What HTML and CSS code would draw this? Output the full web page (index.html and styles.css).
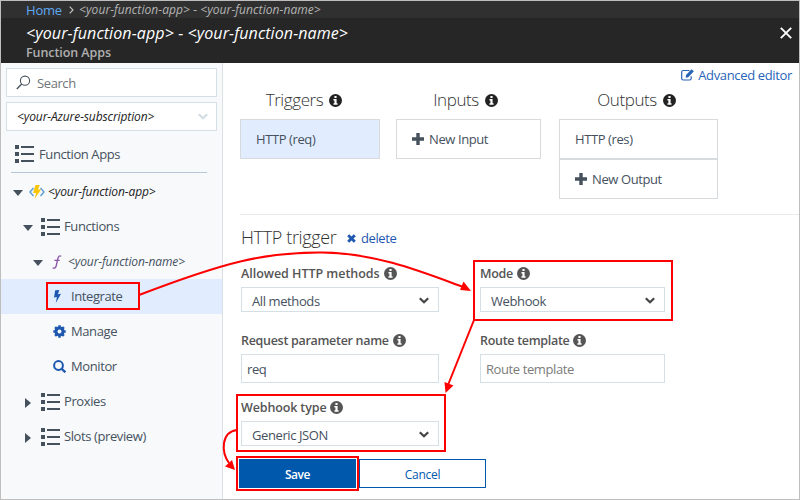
FILE: index.html
```html
<!DOCTYPE html>
<html lang="en">
<head>
<meta charset="utf-8">
<title>Function Apps</title>
<link rel="stylesheet" href="styles.css">
</head>
<body>
<svg class="defs" aria-hidden="true">
  <symbol id="list" viewBox="0 0 19 18"><path d="M0 0h4v4H0zM0 7h4v4H0zM0 14h4v4H0zM6 1h13v2H6zM6 8h13v2H6zM6 15h13v2H6z"/></symbol>
  <symbol id="info" viewBox="0 0 12 12"><circle cx="6" cy="6" r="6"/><path fill="#fff" d="M5 1.800h2v1.800H5zM4.100 4.700H7v3.800h.9V10H4.100V8.500H5V6.100h-.9z"/></symbol>
  <symbol id="plus" viewBox="0 0 12 12"><path d="M4.300 0h3.400v4.300H12v3.400H7.700V12H4.300V7.700H0V4.300h4.300z"/></symbol>
  <symbol id="chev" viewBox="0 0 10 7"><path d="M.8 1.200 5 5.200l4.200-4" fill="none" stroke="currentColor" stroke-width="2.200"/></symbol>
</svg>
<div class="frame">
  <nav class="crumbs">
    <a class="home">Home</a>
    <svg class="sep" viewBox="0 0 5 8"><path d="M.7.7 4 4 .7 7.300" fill="none" stroke="#c8c8c8" stroke-width="1.100"/></svg>
    <span class="path">&lt;your-function-app&gt; - &lt;your-function-name&gt;</span>
  </nav>
  <header class="head">
    <div>
      <h1 class="title">&lt;your-function-app&gt; - &lt;your-function-name&gt;</h1>
      <p class="subtitle">Function Apps</p>
    </div>
    <svg class="close" viewBox="0 0 12 12"><path d="M.8.8l10.400 10.400M11.200.8.8 11.200" stroke="#fff" stroke-width="1.900"/></svg>
  </header>
  <div class="body">
    <aside class="side">
      <div class="box search">
        <svg class="glass" viewBox="0 0 15 15"><circle cx="9" cy="5.700" r="4.600" fill="none" stroke="currentColor" stroke-width="1.100"/><path d="M5.700 9 .8 14" stroke="currentColor" stroke-width="1.300"/></svg>
        <span>Search</span>
      </div>
      <div class="box subs"><em>&lt;your-Azure-subscription&gt;</em><svg class="chev pale"><use href="#chev"/></svg></div>
      <div class="apps"><svg class="list"><use href="#list"/></svg><span>Function Apps</span></div>
      <ul class="tree">
        <li class="l1"><i class="down"></i>
          <svg class="bolt-app" viewBox="0 0 16 14"><path d="M4.500 3 1 7l3.500 4M11.500 3 15 7l-3.500 4" fill="none" stroke="#5a9fd6" stroke-width="1.400"/><path fill="#fdc60a" d="M6.500 0h4.300L9 4.500h3.200L5.500 14l1.600-6H4z"/></svg>
          <em class="app">&lt;your-function-app&gt;</em></li>
        <li class="l2"><i class="down"></i><svg class="list"><use href="#list"/></svg><span>Functions</span></li>
        <li class="l3"><i class="down"></i>
          <svg class="func" viewBox="0 0 10 14"><path d="M9.300 1.300C7.500.2 6.300 1.200 5.700 4L4.300 10.500C3.800 12.900 2.500 13.700.7 12.800M2.400 5.300h5.300" fill="none" stroke="#8a56a8" stroke-width="1.300"/></svg>
          <em class="name">&lt;your-function-name&gt;</em></li>
        <li class="l4 on"><svg class="leaf" viewBox="0 0 13 13"><path d="M2.200.3 6.200 0 5 4.200 8 3.700 2.800 13l1.100-6L1 7.600z"/></svg><span>Integrate</span></li>
        <li class="l4"><svg class="leaf" viewBox="0 0 13 13"><circle cx="6.500" cy="6.500" r="3.500" fill="none" stroke="currentColor" stroke-width="3"/><path d="M6.500.3v2.500M6.500 10.200v2.500M.3 6.500h2.500M10.200 6.500h2.500M2.100 2.100l1.800 1.800M9.100 9.100l1.800 1.800M2.100 10.900l1.800-1.800M9.100 3.900l1.800-1.800" stroke="currentColor" stroke-width="2.500"/></svg><span>Manage</span></li>
        <li class="l4"><svg class="leaf" viewBox="0 0 13 13"><circle cx="5.500" cy="5.500" r="4.400" fill="none" stroke="currentColor" stroke-width="2"/><path d="M8.700 8.700l3.600 3.600" stroke="currentColor" stroke-width="2.300"/></svg><span>Monitor</span></li>
        <li class="l2"><i class="right"></i><svg class="list"><use href="#list"/></svg><span>Proxies</span></li>
        <li class="l2"><i class="right"></i><svg class="list"><use href="#list"/></svg><span>Slots (preview)</span></li>
      </ul>
    </aside>
    <main class="main">
      <a class="advanced"><svg class="edit" viewBox="0 0 13 12"><path d="M8.500 1.500H2.200Q.7 1.500.7 3v6.500Q.7 11 2.200 11h6.500q1.500 0 1.500-1.500V7.300" fill="none" stroke="currentColor" stroke-width="1.200"/><path d="M10.500.2 12.900 2.300 7.300 8.200 4.700 8.700 5 6.100z"/></svg><span>Advanced editor</span></a>
      <section class="bindings">
        <div class="col triggers"><h2><span>Triggers</span><svg class="info"><use href="#info"/></svg></h2>
          <div class="card sel"><span>HTTP (req)</span></div></div>
        <div class="col inputs"><h2><span>Inputs</span><svg class="info"><use href="#info"/></svg></h2>
          <div class="card"><svg class="plus"><use href="#plus"/></svg><span>New Input</span></div></div>
        <div class="col outputs"><h2><span>Outputs</span><svg class="info"><use href="#info"/></svg></h2>
          <div class="card"><span>HTTP (res)</span></div>
          <div class="card"><svg class="plus"><use href="#plus"/></svg><span>New Output</span></div></div>
      </section>
      <section class="form">
        <div class="formhead"><h2>HTTP trigger</h2><svg class="x" viewBox="0 0 9 9"><path d="M1.200 1.200l6.600 6.600M7.800 1.200 1.200 7.800" stroke="currentColor" stroke-width="2.800"/></svg><a>delete</a></div>
        <div class="grid">
          <div class="field"><label><span class="allowed">Allowed HTTP methods</span><svg class="info"><use href="#info"/></svg></label><div class="ctl pick"><span>All methods</span><svg class="chev"><use href="#chev"/></svg></div></div>
          <div class="field"><label><span>Mode</span><svg class="info"><use href="#info"/></svg></label><div class="ctl pick"><span>Webhook</span><svg class="chev"><use href="#chev"/></svg></div></div>
          <div class="field"><label><span>Request parameter name</span><svg class="info"><use href="#info"/></svg></label><div class="ctl text"><span>req</span></div></div>
          <div class="field"><label><span>Route template</span><svg class="info"><use href="#info"/></svg></label><div class="ctl text hint"><span>Route template</span></div></div>
          <div class="field"><label><span class="hooktype">Webhook type</span><svg class="info"><use href="#info"/></svg></label><div class="ctl pick"><span>Generic JSON</span><svg class="chev"><use href="#chev"/></svg></div></div>
        </div>
        <div class="actions"><button class="save">Save</button><button class="cancel">Cancel</button></div>
      </section>
    </main>
  </div>
</div>
<svg class="marks" viewBox="0 0 800 500">
  <g fill="none" stroke="#f00" stroke-width="2">
    <rect x="47" y="283" width="92" height="26"/>
    <rect x="474" y="261" width="198" height="59"/>
    <rect x="237" y="395" width="208" height="56"/>
    <rect x="237" y="457" width="121" height="33"/>
    <path d="M139 295C225 262 265 252 322 252.500C375 253 420 271 463 287"/>
    <path d="M474 320 448 385"/>
    <path d="M237 430C221 432 221 452 229 463"/>
  </g>
  <g fill="#f00">
    <path d="M471 291 463.500 281.500 460 290z"/>
    <path d="M445.500 393 444.500 382 453.500 385.500z"/>
    <path d="M235 470 225 466.500 232 460z"/>
  </g>
</svg>
</body>
</html>
```
FILE: styles.css
```css
* { box-sizing: border-box; margin: 0; padding: 0; }
body { font: 13px/18px "Open Sans", "Noto Sans", sans-serif; color: #46515e; letter-spacing: -0.4px; overflow: hidden; }
svg { display: block; flex: none; fill: currentColor; }
span, em, a { white-space: nowrap; }
.defs { position: absolute; width: 0; height: 0; }
.frame { width: 800px; height: 500px; border: 1px solid #bdbebd; display: flex; flex-direction: column; background: #fff; }
.crumbs { height: 17px; background: #303030; display: flex; align-items: center; padding-left: 25px; font-size: 13px; }
.home { color: #5ea9f0; width: 43px; letter-spacing: -0.2px; }
.sep { width: 5px; height: 8px; margin-right: 5px; }
.path { font-style: italic; font-size: 12px; color: #b4b4b4; letter-spacing: 0.08px; padding-top: 1px; }
.head { height: 45px; background: #262626; color: #fff; display: flex; justify-content: space-between; padding: 4px 7px 0 25px; }
.title { font-size: 16px; line-height: 22px; font-weight: 400; font-style: italic; letter-spacing: 0.1px; }
.subtitle { font-size: 12.5px; line-height: 18px; font-weight: 600; color: #b0b0b0; letter-spacing: -0.07px; }
.close { width: 12px; height: 12px; margin-top: 5px; }
.body { flex: 1; display: flex; min-height: 0; }
.side { width: 222px; background: #f7f9fb; border-right: 1px solid #d9e0e6; padding-top: 5px; }
.box { width: 211px; height: 29px; margin: 0 0 5px 5px; background: #fff; border: 1px solid #d5dfe6; display: flex; align-items: center; padding: 0 8px 0 9px; }
.search { color: #6f747a; }
.glass { width: 15px; height: 15px; color: #46515e; margin-right: 6px; }
.subs { justify-content: space-between; padding-left: 10px; color: #222; font-size: 12px; letter-spacing: -0.1px; }
.chev { width: 10px; height: 7px; color: #444; }
.pick .chev { margin-top: 2px; }
.pale { color: #d3dde4; }
.apps { display: flex; align-items: center; height: 37px; width: 196px; margin: 0 0 0 10px; padding-left: 4px; border-bottom: 1px solid #b3c7d8; gap: 5px; }
.list { width: 19px; height: 18px; color: #46515e; }
.tree { list-style: none; padding-top: 1px; }
.tree li { height: 35px; display: flex; align-items: center; }
.tree li span { padding-bottom: 1px; }
.tree .l1 { padding-left: 12px; }
.tree .l2 { padding-left: 22px; }
.tree .l3 { padding-left: 32px; }
.tree .l4 { padding-left: 52px; }
.tree .on { background: #e1edfe; }
.down { border: 5.5px solid transparent; border-top: 6px solid #46515e; border-bottom: 0; margin: 2px 8px 0 0; }
.l1 .down { margin-right: 7px; }
.right { border: 5.5px solid transparent; border-left: 6px solid #46515e; border-right: 0; margin: 2px 10px 0 2px; }
.bolt-app { width: 16px; height: 14px; margin-right: 3px; margin-left: -1px; }
.app { font-size: 12px; color: #222; letter-spacing: -0.1px; padding-top: 1px; }
.tree .list + span { margin-left: 4px; }
.func { width: 10px; height: 14px; margin: 0 6px 0 1px; }
.name { font-size: 12px; letter-spacing: -0.1px; padding-top: 1px; }
.leaf { width: 13px; height: 13px; color: #1d57b0; margin-right: 5px; }
.main { flex: 1; padding: 0 0 0 17px; min-width: 0; }
.advanced { display: flex; justify-content: flex-end; align-items: center; gap: 4px; color: #2764b8; height: 18px; margin: 3px 7px 1px 0; letter-spacing: -0.35px; }
.edit { width: 13px; height: 12px; }
.bindings { display: flex; align-items: flex-start; height: 130px; border-bottom: 1px solid #e8eaeb; padding-top: 2px; }
.triggers { width: 140px; margin-right: 16px; }
.inputs { width: 145px; margin-right: 18px; }
.outputs { width: 159px; }
.col h2 { display: flex; justify-content: center; align-items: center; gap: 6px; height: 32px; padding-bottom: 7px; }
.col h2 .info { margin-top: 1px; }
.triggers h2 { padding-right: 12px; }
.inputs h2 { padding-right: 6px; }
.outputs h2 { padding-right: 4px; }
h2 { font-weight: 300; font-size: 17px; line-height: 24px; letter-spacing: -0.4px; color: #333; }
.info { width: 13px; height: 13px; }
.col .info { color: #222; }
.card { height: 40px; border: 1px solid #d8dbde; display: flex; align-items: center; padding-left: 15px; gap: 5px; }
.sel { background: #e1edfe; }
.plus { width: 12px; height: 12px; }
.formhead { display: flex; align-items: center; height: 24px; margin: 10px 0 15px 1px; }
.formhead h2 { width: 106px; font-size: 18px; letter-spacing: -0.35px; }
.x { width: 9px; height: 9px; color: #1d57b0; margin: 2px 5px 0 0; }
.formhead a { color: #1d57b0; padding-top: 2px; }
.grid { display: grid; grid-template-columns: 198px 185px; column-gap: 41px; grid-template-rows: 67px 67px 61px; margin-left: 1px; }
.field label { display: flex; align-items: center; gap: 4px; height: 18px; font-weight: 600; color: #555; font-size: 12.5px; letter-spacing: -0.3px; margin-bottom: 5px; }
.field label span { padding-top: 1px; }
.field .allowed { letter-spacing: -0.03px; }
.field .hooktype { letter-spacing: -0.13px; }
.ctl { border: 1px solid #d5dfe6; display: flex; align-items: center; }
.ctl span { padding-top: 3px; }
.text span { padding-top: 1px; }
.pick { height: 25px; justify-content: space-between; padding: 0 9px 0 10px; }
.text { height: 29px; padding-left: 5px; }
.hint { color: #7b7b7b; }
.actions { display: flex; gap: 3px; margin-left: -1px; }
.actions button { height: 29px; font: 600 12px "Open Sans", sans-serif; letter-spacing: -0.45px; border: 1px solid #0058ad; padding-top: 2px; }
.actions .save { width: 117px; background: #0058ad; color: #fff; }
.actions .cancel { width: 127px; background: #fff; color: #0058ad; font-weight: 500; letter-spacing: -0.3px; }
.marks { position: absolute; left: 0; top: 0; width: 800px; height: 500px; }
```
